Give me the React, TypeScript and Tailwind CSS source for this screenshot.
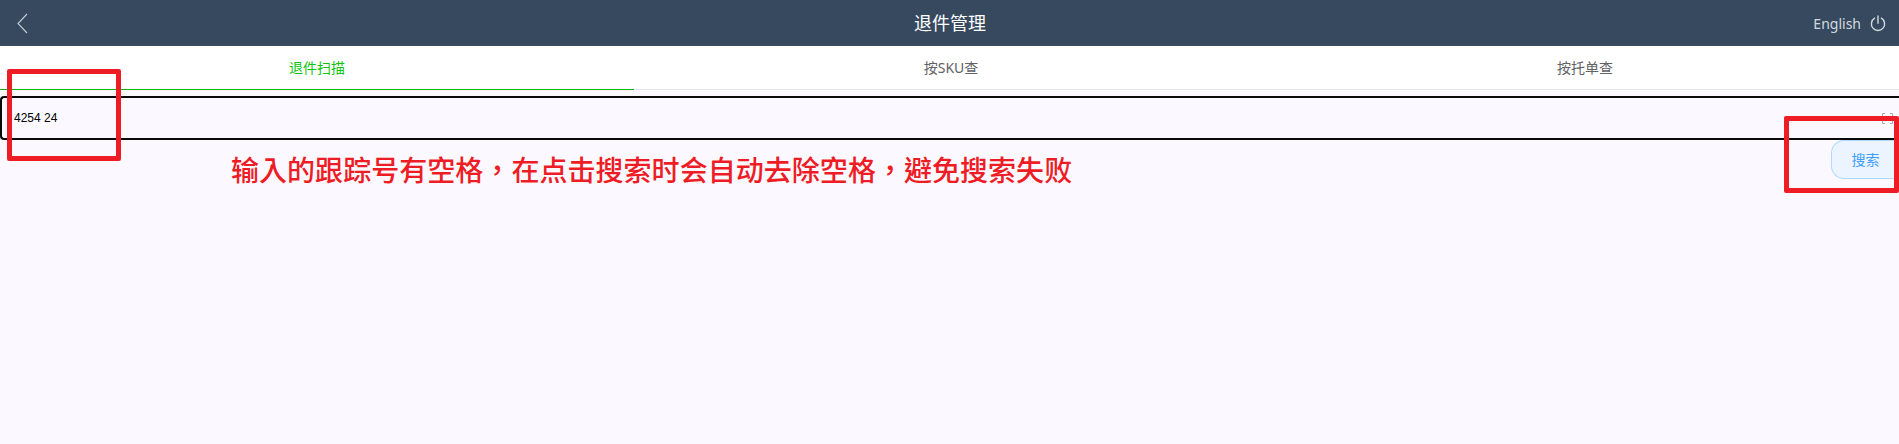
import React from "react";

const cjk = "font-['Noto_Sans','Noto_Sans_CJK_SC',sans-serif]";

function Tab({ label, active }: { label: string; active?: boolean }) {
  return (
    <div
      className={
        "w-[634px] shrink-0 h-[44px] flex items-center justify-center text-[14px] border-b " +
        (active ? "border-[#0fb50f] text-[#0fc40f]" : "border-[#e4e7ed] text-[#606266]")
      }
    >
      {label}
    </div>
  );
}

export default function App() {
  return (
    <div className={"relative w-[1899px] h-[444px] overflow-hidden bg-[#fbf9ff] " + cjk}>
      <header className="h-[46px] bg-[#36495f] flex items-center justify-between pl-[17px] pr-[13px]">
        <svg width="11" height="21" viewBox="0 0 11 21" fill="none" className="text-[#c3ccd6]">
          <path d="M10 1 L1 10.5 L10 20" stroke="currentColor" strokeWidth="1.1" />
        </svg>
        <div className="absolute left-0 right-0 top-0 h-[46px] pl-[1px] flex items-center justify-center text-[18px] text-white pointer-events-none">
          退件管理
        </div>
        <div className="flex items-center gap-[9px] text-[14px] text-[#d3d9df]">
          <span>English</span>
          <svg width="16" height="17" viewBox="0 0 16 17" fill="none" stroke="currentColor" strokeWidth="1.4" strokeLinecap="round">
            <path d="M4.6 3.2 A6.6 6.6 0 1 0 11.4 3.2" />
            <path d="M8 1 V8.2" />
          </svg>
        </div>
      </header>

      <nav className="flex bg-white overflow-hidden">
        <Tab label="退件扫描" active />
        <Tab label="按SKU查" />
        <Tab label="按托单查" />
      </nav>

      <div className="mt-[6px] h-[44px] border-y-2 border-l-2 border-[#0a0a0a] rounded-l-[4px] flex items-center pl-[12px] pr-[6px] justify-between font-['Liberation_Sans',sans-serif] text-[12px] text-black">
        <span>4254 24</span>
        <svg width="11" height="11" viewBox="0 0 11 11" fill="none" stroke="#a9a9a9" strokeWidth="1">
          <path d="M0.5 3 V0.5 H3 M8 0.5 H10.5 V3 M0.5 8 V10.5 H3 M8 10.5 H10.5 V8" />
        </svg>
      </div>

      <div className="flex justify-end">
        <button className="w-[68px] h-[39px] border border-r-0 border-[#b3d8ff] bg-[#ecf5ff] text-[#409eff] text-[14px] rounded-l-[13px]">
          搜索
        </button>
      </div>

      <div className="absolute left-[7px] top-[69px] w-[114px] h-[92px] border-[5px] border-[#ee1c25] rounded-[2px]" />
      <div className="absolute left-[1784px] top-[116px] w-[115px] h-[77px] border-[5px] border-[#ee1c25] rounded-[2px]" />
      <div className="absolute left-[231px] top-[150px] h-[38px] leading-[38px] text-[28px] tracking-[0.04px] font-medium whitespace-nowrap text-[#ee1c25] font-['Noto_Sans_CJK_TC',sans-serif]">
        输入的跟踪号有空格，在点击搜索时会自动去除空格，避免搜索失败
      </div>
    </div>
  );
}
